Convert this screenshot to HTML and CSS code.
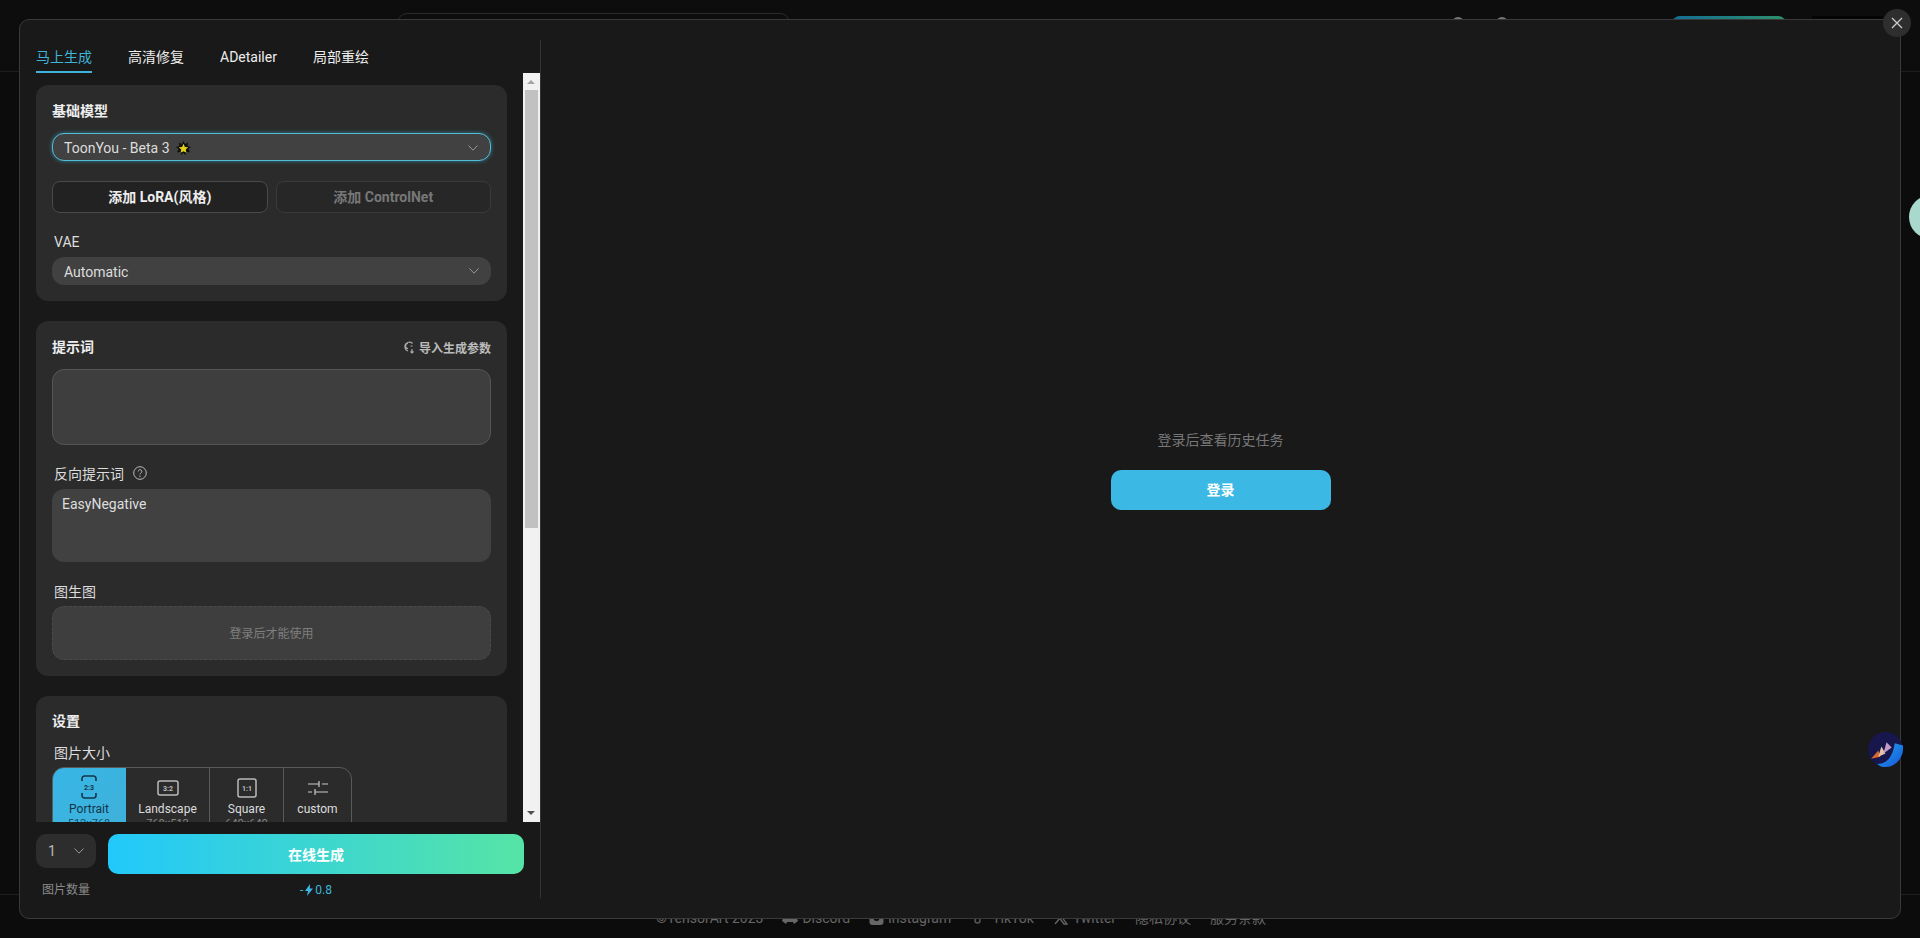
FILE: index.html
```html
<!DOCTYPE html>
<html lang="zh-CN">
<head>
  <meta charset="UTF-8">
  <title>TensorArt</title>
  <link rel="stylesheet" href="styles.css">
</head>
<body>

  <!-- Page behind the dialog -->
  <header class="topbar">
    <div class="search"></div>
    <div class="topbar-right">
      <span class="dot dot-a"></span>
      <span class="dot dot-b"></span>
      <span class="top-btn"></span>
      <span class="top-dark"></span>
    </div>
  </header>
  <main class="page"></main>
  <footer class="footer">
    <span>©TensorArt 2023</span>
    <span class="foot-link">
      <svg viewBox="0 0 16 12" width="16" height="12"><path fill="#666" d="M3 1l3-1 .5 1h3L10 0l3 1 3 8-4 3-1-2H5l-1 2-4-3z"/></svg>
      Discord
    </span>
    <span class="foot-link">
      <svg viewBox="0 0 14 14" width="15" height="14"><rect width="14" height="14" rx="3" fill="#666"/><circle cx="7" cy="7" r="3" fill="#0c0c0c"/></svg>
      Instagram
    </span>
    <span class="foot-link">
      <svg viewBox="0 0 12 14" width="18" height="14"><path fill="none" stroke="#555" stroke-width="1.500" d="M7 1v8.500A2.500 2.500 0 1 1 4.500 7M7 1c.3 2 1.500 3 3.500 3.200"/></svg>
      TikTok
    </span>
    <span class="foot-link">
      <svg viewBox="0 0 14 14" width="16" height="14"><path fill="none" stroke="#666" stroke-width="1.300" d="M1 13L6 7M13 1L8 6M1 1h3l9 12h-3z"/></svg>
      Twitter
    </span>
    <span>隐私协议</span>
    <span>服务条款</span>
  </footer>

  <div class="avatar"></div>

  <!-- Dialog -->
  <section class="modal">
    <div class="side">
      <nav class="tabs">
        <a class="tab active">马上生成</a>
        <a class="tab">高清修复</a>
        <a class="tab">ADetailer</a>
        <a class="tab">局部重绘</a>
      </nav>

      <div class="scroll-wrap">
        <div class="scroll-content">
          <div class="panel model-panel">
            <h3 class="panel-title">基础模型</h3>
            <div class="select focused">
              <span>ToonYou - Beta 3</span>
              <svg class="star" viewBox="0 0 16 16">
                <path fill="#111" d="M8 0l1.600 3.200L13 1.600l-.6 3.600L16 6.400l-2.800 2.200L15 12l-3.800-.4L10 15l-2-2.400L5.600 15l-.8-3.400L1 12l1.800-3.400L0 6.400l3.600-1.200L3 1.600l3.400 1.600z"/>
                <path fill="#e3d21c" d="M8 3l1.500 3.300 3.500.4-2.600 2.400.7 3.500L8 10.900l-3.100 1.700.7-3.500L3 6.700l3.500-.4z"/>
              </svg>
              <svg class="chevron" viewBox="0 0 10 6"><path d="M.5.5L5 5.200 9.500.5"/></svg>
            </div>
            <div class="btn-row">
              <button class="add-btn">添加 LoRA(风格)</button>
              <button class="add-btn disabled">添加 ControlNet</button>
            </div>
            <label class="field-label vae-label">VAE</label>
            <div class="select">
              <span>Automatic</span>
              <svg class="chevron" viewBox="0 0 10 6"><path d="M.5.5L5 5.200 9.500.5"/></svg>
            </div>
          </div>

          <div class="panel">
            <div class="title-row">
              <h3 class="panel-title">提示词</h3>
              <span class="import">
                <svg viewBox="0 0 12 14" width="12" height="14"><path d="M9.500 3.500A4.500 4.500 0 1 0 5 11M5 3.500a2.500 2.500 0 0 0 0 5M7.500 6h2M9 9v4M7.500 11.500L9 13l1.500-1.500" fill="none" stroke="#aaa" stroke-width="1.200"/></svg>
                导入生成参数
              </span>
            </div>
            <textarea class="prompt bordered"></textarea>
            <label class="field-label neg-label">
              反向提示词
              <svg viewBox="0 0 14 14" width="14" height="14"><circle cx="7" cy="7" r="6.300" fill="none" stroke="#bbb"/><path d="M5.200 5.400a1.800 1.800 0 1 1 2.700 1.600c-.6.400-.9.700-.9 1.400" fill="none" stroke="#bbb"/><circle cx="7" cy="10.300" r=".7" fill="#bbb"/></svg>
            </label>
            <textarea class="prompt neg">EasyNegative</textarea>
            <label class="field-label img-label">图生图</label>
            <div class="login-box">登录后才能使用</div>
          </div>

          <div class="panel settings">
            <h3 class="panel-title">设置</h3>
            <label class="field-label size-label">图片大小</label>
            <div class="sizes">
              <div class="size active" style="width: 74px">
                <svg viewBox="0 0 16 24" width="16" height="24">
                  <path d="M1 6V3.500A2.500 2.500 0 0 1 3.500 1h9A2.500 2.500 0 0 1 15 3.500V6M1 18v2.500A2.500 2.500 0 0 0 3.500 23h9a2.500 2.500 0 0 0 2.500-2.500V18" fill="none" stroke="#14344a" stroke-width="1.600"/>
                  <text x="8" y="14.500" text-anchor="middle" class="ratio" fill="#14344a">2:3</text>
                </svg>
                <span>Portrait</span>
                <small>512x768</small>
              </div>
              <div class="size" style="width: 84px">
                <svg viewBox="0 0 22 16" width="22" height="16">
                  <rect x="1" y="1" width="20" height="14" rx="2" fill="none" stroke="#bbb" stroke-width="1.500"/>
                  <text x="11" y="10.500" text-anchor="middle" class="ratio" fill="#bbb">3:2</text>
                </svg>
                <span>Landscape</span>
                <small>768x512</small>
              </div>
              <div class="size" style="width: 74px">
                <svg viewBox="0 0 20 20" width="20" height="20">
                  <rect x="1" y="1" width="18" height="18" rx="2" fill="none" stroke="#bbb" stroke-width="1.500"/>
                  <text x="10" y="12.500" text-anchor="middle" class="ratio" fill="#bbb">1:1</text>
                </svg>
                <span>Square</span>
                <small>640x640</small>
              </div>
              <div class="size last" style="width: 67px">
                <svg viewBox="0 0 20 16" width="20" height="16">
                  <path d="M0 4h11M11 1v6M14 4h6M0 12h4M7 12h13M7 9v6" fill="none" stroke="#ccc" stroke-width="1.200"/>
                </svg>
                <span>custom</span>
                <small>-</small>
              </div>
            </div>
          </div>
        </div>

        <div class="scrollbar">
          <span class="arrow up"></span>
          <span class="thumb"></span>
          <span class="arrow down"></span>
        </div>
      </div>

      <div class="gen-bar">
        <div class="count">
          <span>1</span>
          <svg class="chevron" viewBox="0 0 10 6"><path d="M.5.5L5 5.200 9.500.5"/></svg>
        </div>
        <button class="gen-btn">在线生成</button>
        <div class="count-label">图片数量</div>
        <div class="cost">
          -
          <svg viewBox="0 0 8 12" width="8" height="12"><path fill="#3bb8e3" d="M5 0L0 7h3l-1 5 6-7.500H4.800z"/></svg>
          0.8
        </div>
      </div>
    </div>

    <div class="history">
      <p>登录后查看历史任务</p>
      <button class="login-btn">登录</button>
    </div>
  </section>

  <button class="close" aria-label="close">
    <svg viewBox="0 0 12 12" width="12" height="12"><path d="M1 1l10 10M11 1L1 11" stroke="#ccc" stroke-width="1.300"/></svg>
  </button>

  <svg class="orb" viewBox="0 0 34 34" width="35" height="35">
    <defs>
      <linearGradient id="orbBlue" x1="0" y1="0" x2="1" y2="1">
        <stop offset="0" stop-color="#1ba8ef"/>
        <stop offset="1" stop-color="#1a55d8"/>
      </linearGradient>
    </defs>
    <circle cx="17" cy="17" r="17" fill="#17174d"/>
    <path d="M3 26l7-8 2 6z" fill="#d8682c"/>
    <path d="M10 24l3-10 4 7z" fill="#e6c3a8"/>
    <path d="M15 21l3-11 5 5z" fill="#c49ac8"/>
    <path d="M9 31c9 0 15-6 17-20l8 2c1 12-7 21-17 21-4 0-6-1-8-3z" fill="url(#orbBlue)"/>
  </svg>

</body>
</html>
```

FILE: styles.css
```css
* {
  box-sizing: border-box;
}

body {
  font-family: Roboto, "Noto Sans CJK SC", sans-serif;
  background: #0c0c0c;
  color: #e6e6e6;
  margin: 0;
  height: 938px;
  overflow: hidden;
  display: flex;
  flex-direction: column;
  font-size: 14px;
}

button {
  font-family: inherit;
  cursor: pointer;
}

/* page behind dialog */
.topbar {
  height: 72px;
  flex: none;
  border-bottom: 1px solid #1e1e1e;
  padding: 13px 0 0 397px;
  display: flex;
  background: #0d0d0d;
}

.search {
  width: 393px;
  height: 36px;
  border: 1px solid #2a2a2a;
  border-radius: 10px;
}

.topbar-right {
  margin-left: auto;
  display: flex;
  align-items: flex-start;
}

.dot {
  width: 12px;
  height: 12px;
  border-radius: 50%;
  background: #777;
  margin-top: 4px;
}

.dot-a {
  margin-right: 32px;
}

.dot-b {
  margin-right: 164px;
}

.top-btn {
  width: 114px;
  height: 36px;
  margin-top: 3px;
  border-radius: 8px;
  background: linear-gradient(90deg, #136f94, #2c8f6c);
}

.top-dark {
  width: 71px;
  height: 30px;
  margin: 3px 37px 0 26px;
  background: #050505;
}

.page {
  flex: 1;
}

.footer {
  height: 44px;
  flex: none;
  border-top: 1px solid #1e1e1e;
  padding: 14px 0 0 2px;
  display: flex;
  align-items: flex-start;
  justify-content: center;
  gap: 19px;
  color: #666;
  font-size: 14px;
  line-height: 18px;
}

.foot-link {
  display: flex;
  align-items: center;
  gap: 4px;
}

.avatar {
  position: absolute;
  left: 1909px;
  top: 195px;
  width: 44px;
  height: 44px;
  border-radius: 50%;
  background: #a9d8cd;
}

/* dialog */
.modal {
  position: absolute;
  left: 19px;
  top: 19px;
  width: 1882px;
  height: 900px;
  background: #191919;
  border: 1px solid #3a3a3a;
  border-radius: 10px;
  display: flex;
}

.side {
  width: 521px;
  flex: none;
  margin: 20px 0;
  padding-left: 16px;
  border-right: 1px solid #333;
  display: flex;
  flex-direction: column;
}

.tabs {
  height: 33px;
  flex: none;
  display: flex;
  gap: 36px;
}

.tab {
  height: 33px;
  line-height: 34px;
  font-size: 14px;
  color: #eee;
  border-bottom: 2px solid transparent;
}

.tab.active {
  color: #3fb4d8;
  border-bottom-color: #3fb4d8;
}

.scroll-wrap {
  height: 749px;
  flex: none;
  display: flex;
}

.scroll-content {
  width: 487px;
  flex: none;
  overflow: hidden;
  padding-top: 12px;
}

.scrollbar {
  width: 17px;
  flex: none;
  background: #f1f1f1;
  position: relative;
}

.thumb {
  position: absolute;
  left: 2px;
  top: 17px;
  width: 13px;
  height: 438px;
  background: #c1c1c1;
}

.arrow {
  position: absolute;
  left: 4px;
  width: 0;
  height: 0;
  border-left: 4px solid transparent;
  border-right: 4px solid transparent;
}

.arrow.up {
  top: 7px;
  border-bottom: 4px solid #a3a3a3;
}

.arrow.down {
  bottom: 7px;
  border-top: 4px solid #505050;
}

.panel {
  width: 471px;
  background: #2b2b2b;
  border-radius: 12px;
  padding: 15px 16px 16px;
  margin-bottom: 20px;
}

.model-panel {
  padding-top: 16px;
}

.panel-title {
  margin: 0;
  font-size: 14px;
  line-height: 20px;
  font-weight: 700;
  color: #eee;
}

.select {
  height: 28px;
  background: #414141;
  border-radius: 12px;
  padding: 2px 12px 0;
  margin-top: 12px;
  display: flex;
  align-items: center;
  gap: 6px;
  position: relative;
  color: #ddd;
  font-size: 14px;
}

.select.focused {
  border: 1px solid #53bcd9;
  padding: 2px 11px 0;
  box-shadow: 0 0 4px rgba(60, 190, 230, .55);
}

.star {
  width: 15px;
  height: 15px;
}

.chevron {
  width: 10px;
  height: 6px;
  fill: none;
  stroke: #999;
  stroke-width: 1;
}

.select .chevron {
  position: absolute;
  right: 12px;
  top: 11px;
}

.btn-row {
  display: flex;
  gap: 8px;
  margin-top: 20px;
}

.add-btn {
  flex: 1;
  height: 32px;
  background: #222;
  border: 1px solid #4a4a4a;
  border-radius: 8px;
  color: #eee;
  font-size: 14px;
  font-weight: 700;
  padding: 0 0 2px;
}

.add-btn.disabled {
  background: #272727;
  border-color: #3a3a3a;
  color: #777;
}

.field-label {
  display: flex;
  align-items: center;
  gap: 9px;
  height: 20px;
  padding-left: 2px;
  color: #ddd;
  font-size: 14px;
}

.vae-label {
  margin-top: 19px;
}

.vae-label + .select {
  margin-top: 5px;
}

.title-row {
  display: flex;
  justify-content: space-between;
  align-items: center;
  padding-top: 1px;
}

.import {
  display: flex;
  align-items: center;
  gap: 4px;
  font-size: 12px;
  font-weight: 700;
  color: #bbb;
}

.prompt {
  display: block;
  width: 100%;
  background: #414141;
  border: none;
  border-radius: 12px;
  color: #ddd;
  font-family: inherit;
  font-size: 14px;
  line-height: 18px;
  padding: 7px 10px;
  resize: none;
  outline: none;
}

.prompt.bordered {
  height: 76px;
  margin-top: 12px;
  border: 1px solid #555;
  background: #3e3e3e;
}

.neg-label {
  margin-top: 18px;
}

.prompt.neg {
  height: 73px;
  margin-top: 6px;
  padding-top: 6px;
}

.img-label {
  margin-top: 19px;
}

.login-box {
  height: 54px;
  margin-top: 5px;
  background: #3e3e3e;
  border: 1px dashed #4a4a4a;
  border-radius: 12px;
  display: flex;
  align-items: center;
  justify-content: center;
  padding-bottom: 1px;
  color: #7f7f7f;
  font-size: 12px;
}

.size-label {
  margin-top: 11px;
}

.sizes {
  display: flex;
  width: 300px;
  margin-top: 5px;
  border: 1px solid #5a5a5a;
  border-radius: 12px;
  overflow: hidden;
}

.size {
  flex: none;
  height: 78px;
  padding-top: 7px;
  border-right: 1px solid #5a5a5a;
  display: flex;
  flex-direction: column;
  align-items: center;
  justify-content: flex-start;
  color: #ddd;
  font-size: 12px;
  line-height: 15px;
}

.size svg {
  height: 26px;
  flex: none;
}

.size span {
  margin-top: 1px;
}

.size small {
  font-size: 11px;
  color: #888;
  line-height: 14px;
}

.size.active {
  background: linear-gradient(135deg, #38b6e6, #3fb0d8);
  color: #14344a;
  margin: -1px 0 -1px -1px;
  border-right: none;
}

.size.active span {
  margin-top: 2px;
}

.size.active small {
  color: #14506e;
}

.size.last {
  border-right: none;
}

.ratio {
  font-size: 7px;
  font-weight: 700;
}

/* generate row */
.gen-bar {
  display: grid;
  grid-template-columns: 60px 416px;
  column-gap: 12px;
  padding-top: 12px;
}

.count {
  height: 34px;
  background: #2d2d2d;
  border-radius: 10px;
  padding: 0 12px;
  display: flex;
  align-items: center;
  justify-content: space-between;
  color: #bbb;
  font-size: 14px;
}

.gen-btn {
  height: 40px;
  border: none;
  border-radius: 10px;
  background: linear-gradient(90deg, #22c8fb, #56e4a6);
  color: #fff;
  font-size: 14px;
  font-weight: 700;
}

.count-label {
  margin-top: 6px;
  padding-left: 6px;
  white-space: nowrap;
  color: #8a8a8a;
  font-size: 12px;
  line-height: 20px;
}

.cost {
  margin-top: 6px;
  display: flex;
  align-items: center;
  justify-content: center;
  gap: 2px;
  color: #3bb8d8;
  font-size: 12px;
  line-height: 20px;
}

/* history side */
.history {
  flex: 1;
  display: flex;
  flex-direction: column;
  align-items: center;
  justify-content: center;
}

.history p {
  margin: 0 0 19px;
  color: #777;
  font-size: 14px;
  line-height: 22px;
}

.login-btn {
  width: 220px;
  height: 40px;
  border: none;
  border-radius: 10px;
  background: #3bb8e3;
  color: #fff;
  font-size: 14px;
  font-weight: 700;
  padding: 0 0 2px;
}

.close {
  position: absolute;
  left: 1883px;
  top: 9px;
  width: 28px;
  height: 28px;
  padding: 0;
  border: none;
  border-radius: 50%;
  background: #2e2e2e;
  display: flex;
  align-items: center;
  justify-content: center;
}

.orb {
  position: absolute;
  left: 1868px;
  top: 732px;
}
```
